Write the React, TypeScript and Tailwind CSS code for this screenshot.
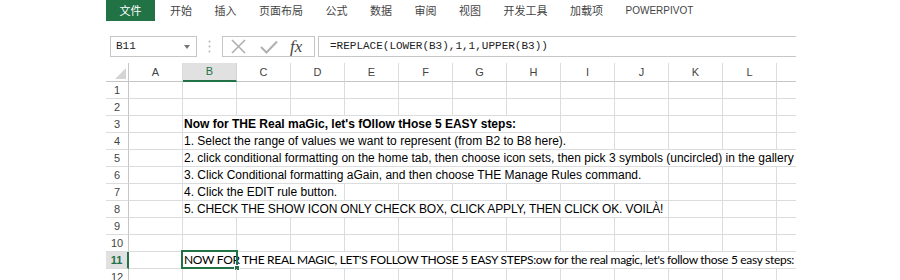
import React from "react";

const tabs = ["开始", "插入", "页面布局", "公式", "数据", "审阅", "视图", "开发工具", "加载项"];
const cols = ["A", "B", "C", "D", "E", "F", "G", "H", "I", "J", "K", "L", ""];

type Row = {
  n: number;
  text?: string;
  span?: string;
  count?: number;
  bold?: boolean;
  calibri?: boolean;
  tight?: boolean;
  selected?: boolean;
};

const rows: Row[] = [
  { n: 1 },
  { n: 2 },
  { n: 3, text: "Now for THE Real maGic, let's fOllow tHose 5 EASY steps:", span: "col-span-7", count: 7, bold: true },
  { n: 4, text: "1. Select the range of values we want to represent (from B2 to B8 here).", span: "col-span-8", count: 8 },
  {
    n: 5,
    text: "2. click conditional formatting on the home tab, then choose icon sets, then pick 3 symbols (uncircled) in the gallery",
    span: "col-span-12",
    count: 12,
  },
  { n: 6, text: "3. Click Conditional formatting aGain, and then choose THE Manage Rules command.", span: "col-span-9", count: 9 },
  { n: 7, text: "4. Click the EDIT rule button.", span: "col-span-3", count: 3 },
  {
    n: 8,
    text: "5. CHECK THE SHOW ICON ONLY CHECK BOX, CLICK APPLY, THEN CLICK OK. VOILÀ!",
    span: "col-span-9",
    count: 9,
    tight: true,
  },
  { n: 9 },
  { n: 10 },
  {
    n: 11,
    text: "NOW FOR THE REAL MAGIC, LET'S FOLLOW THOSE 5 EASY STEPS:ow for the real magic, let's follow those 5 easy steps:",
    span: "col-span-12",
    count: 12,
    calibri: true,
    selected: true,
  },
  { n: 12 },
];

function EmptyCells({ from }: { from: number }) {
  // columns B..M are indices 1..12, M has no right line
  const cells = [];
  for (let i = from; i <= 12; i++) {
    cells.push(
      <div
        key={i}
        className={i === 12 ? "h-[17px] border-b border-[#dadcdd]" : "h-[17px] border-r border-b border-[#dadcdd]"}
      />
    );
  }
  return <>{cells}</>;
}

function GridRow({ row }: { row: Row }) {
  const count = row.count ?? 0;
  return (
    <div className="relative grid grid-cols-[23px_repeat(12,54px)_19px]">
      <div
        className={
          row.selected
            ? "h-[17px] flex items-center justify-center bg-[#e1e1e1] border-r-2 border-r-[#217346] border-b border-b-[#dadcdd] text-[11px] font-bold text-[#217346]"
            : "h-[17px] flex items-center justify-center border-r border-r-[#c6c6c6] border-b border-b-[#dadcdd] text-[11px] text-[#444]"
        }
      >
        {row.n}
      </div>
      <div className="h-[17px] border-r border-b border-[#dadcdd]" />
      {row.text ? (
        <>
          <div
            className={
              row.span +
              " h-[17px] overflow-hidden whitespace-nowrap border-b border-[#dadcdd] pl-[1px] " +
              (count < 12 ? "border-r " : "") +
              (row.calibri
                ? "font-['Lato'] text-[12px] leading-[16px] tracking-[-0.31px] text-black"
                : "text-[12px] leading-[16px] text-black") +
              (row.bold ? " font-bold" : "") +
              (row.tight ? " tracking-[-0.15px]" : "")
            }
          >
            {row.text}
          </div>
          <EmptyCells from={count + 1} />
        </>
      ) : (
        <EmptyCells from={1} />
      )}
      {row.selected && (
        <div className="absolute left-[75px] top-[-2px] h-[19px] w-[57px] border-2 border-[#217346]">
          <div className="absolute right-[-4px] bottom-[-4px] h-[6px] w-[6px] bg-[#217346] border border-white" />
        </div>
      )}
    </div>
  );
}

export default function App() {
  return (
    <div className="w-[900px] h-[280px] overflow-hidden bg-white font-['Liberation_Sans','Noto_Sans_CJK_SC',sans-serif]">
      <div className="ml-[106px] w-[690px]">
        {/* ribbon tabs */}
        <div className="flex h-[21px] items-center text-[11px] text-[#444] font-['Noto_Sans_CJK_SC',sans-serif]">
          <div className="flex h-[21px] w-[49px] items-center justify-center bg-[#217346] text-white">文件</div>
          <div className="ml-[15px] flex items-center gap-[22.5px]">
            {tabs.map((t) => (
              <span key={t}>{t}</span>
            ))}
            <span className="font-['Liberation_Sans'] text-[10px]">POWERPIVOT</span>
          </div>
        </div>

        {/* formula bar */}
        <div className="mt-[15px] flex h-[21px]">
          <div className="ml-[4px] flex w-[87px] items-center justify-between border border-[#c6c6c6] pl-[5px] pr-[6px] font-['Liberation_Mono',monospace] text-[11px] text-[#222]">
            <span>B11</span>
            <svg width="6" height="4" viewBox="0 0 6 4">
              <path d="M0 0 L6 0 L3 4 Z" fill="#777" />
            </svg>
          </div>
          <div className="flex w-[25px] items-center justify-center">
            <svg width="3" height="13" viewBox="0 0 3 13">
              <circle cx="1.5" cy="1.5" r="1" fill="#b5b5b5" />
              <circle cx="1.5" cy="6.5" r="1" fill="#b5b5b5" />
              <circle cx="1.5" cy="11.5" r="1" fill="#b5b5b5" />
            </svg>
          </div>
          <div className="flex w-[93px] items-center border border-[#c6c6c6] pl-[8px]">
            <svg width="15" height="15" viewBox="0 0 15 15">
              <path d="M1 1 L14 14 M14 1 L1 14" stroke="#b0b0b0" strokeWidth="1.6" fill="none" />
            </svg>
            <svg width="18" height="14" viewBox="0 0 18 14" className="ml-[14px]">
              <path d="M1 7 L6.5 12.5 L17 1.5" stroke="#b0b0b0" strokeWidth="2" fill="none" />
            </svg>
            <span className="ml-[12px] font-['Liberation_Serif',serif] text-[17px] italic leading-none text-[#444]">
              fx
            </span>
          </div>
          <div className="ml-[3px] flex flex-1 items-center border-y border-l border-[#c6c6c6] pl-[11px] font-['Liberation_Mono',monospace] text-[11px] text-[#222]">
            =REPLACE(LOWER(B3),1,1,UPPER(B3))
          </div>
        </div>

        {/* sheet */}
        <div className="mt-[6px]">
          <div className="grid grid-cols-[23px_repeat(12,54px)_19px] text-[11px] text-[#444]">
            <div className="relative h-[19px] border-r border-b border-[#c6c6c6]">
              <svg width="11" height="11" viewBox="0 0 11 11" className="absolute right-[2px] bottom-[2px]">
                <path d="M11 0 L11 11 L0 11 Z" fill="#d5d5d5" />
              </svg>
            </div>
            {cols.map((c, i) =>
              c === "B" ? (
                <div
                  key={i}
                  className="flex h-[19px] items-center justify-center border-r border-r-[#d4d4d4] border-b-2 border-b-[#217346] bg-[#e1e1e1] text-[#217346]"
                >
                  {c}
                </div>
              ) : (
                <div
                  key={i}
                  className={
                    i === 12
                      ? "h-[19px] border-b border-[#c6c6c6]"
                      : "flex h-[19px] items-center justify-center border-r border-r-[#dadcdd] border-b border-b-[#c6c6c6]"
                  }
                >
                  {c}
                </div>
              )
            )}
          </div>
          {rows.map((r) => (
            <GridRow key={r.n} row={r} />
          ))}
        </div>
      </div>
    </div>
  );
}
